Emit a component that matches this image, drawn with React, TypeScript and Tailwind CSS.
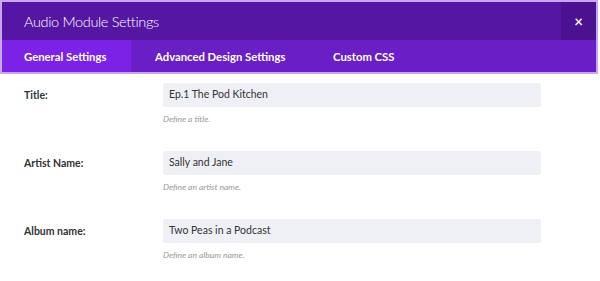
import React from 'react';

const fields = [
  { label: 'Title:', value: 'Ep.1 The Pod Kitchen', help: 'Define a title.' },
  { label: 'Artist Name:', value: 'Sally and Jane', help: 'Define an artist name.' },
  { label: 'Album name:', value: 'Two Peas in a Podcast', help: 'Define an album name.' },
];

const tabs = ['General Settings', 'Advanced Design Settings', 'Custom CSS'];

export default function App() {
  return (
    <div className="w-[600px] h-[281px] bg-white font-['Lato',sans-serif]">
      <div className="w-[598px] border-[2px] border-b-0 border-[#c9a6f0]">
        <div className="flex h-[38px] bg-[#5516a3]">
          <div className="flex-1 flex items-center pl-[22px] pt-[1px] text-[14.5px] tracking-[-0.35px] font-light text-white">
            Audio Module Settings
          </div>
          <button className="w-[35px] h-full bg-[#4a1191] flex items-center justify-center text-white text-[15px] font-semibold">
            ×
          </button>
        </div>
        <div className="flex h-[34px] bg-[#6a1ec6] border-b-[2px] border-[#c9a6f0]">
          {tabs.map((t, i) => (
            <div
              key={t}
              className={[
                'flex items-center pt-[3px] text-[11.3px] font-bold text-white',
                i === 0 ? 'bg-[#7b22e6] pl-[22px] w-[129px]' : '',
                i === 1 ? 'pl-[24px] w-[178px]' : '',
                i === 2 ? 'pl-[24px]' : '',
              ].join(' ')}
            >
              {t}
            </div>
          ))}
        </div>
      </div>
      <div className="pt-[9px]">
        {fields.map(f => (
          <div key={f.label} className="flex h-[68px]">
            <div className="w-[163px] pl-[24px] pt-[5px] text-[10.5px] font-bold text-[#333]">{f.label}</div>
            <div className="w-[378px]">
              <div className="h-[24px] bg-[#eef0f5] rounded-[3px] flex items-center pl-[6px] text-[10.5px] text-[#333]">
                {f.value}
              </div>
              <div className="mt-[6px] text-[8.5px] italic text-[#999]">{f.help}</div>
            </div>
          </div>
        ))}
      </div>
    </div>
  );
}
